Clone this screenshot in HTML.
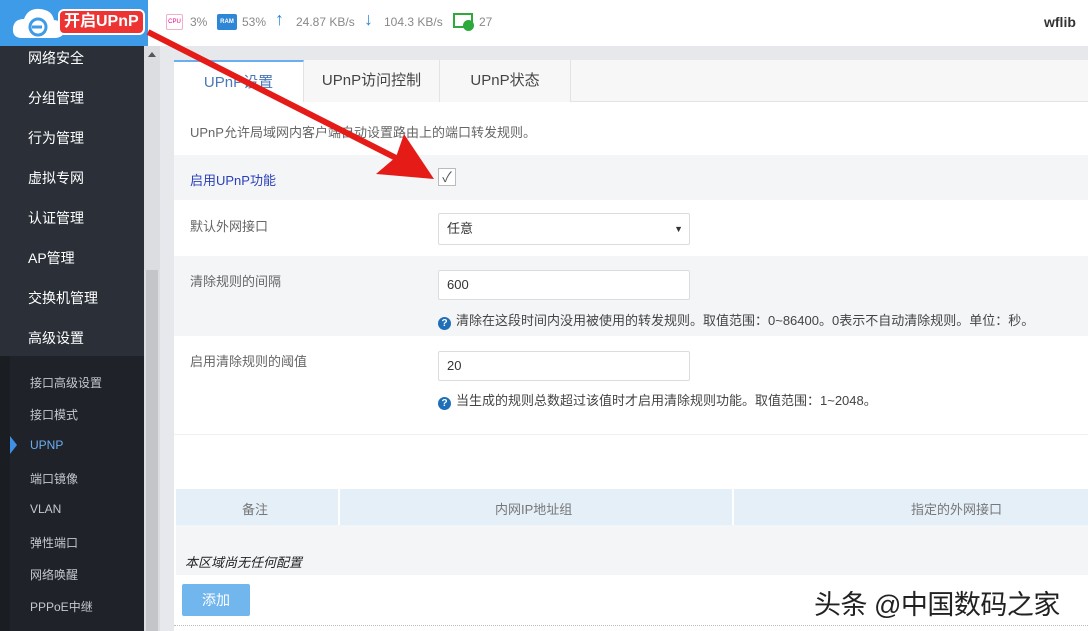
<!DOCTYPE html>
<html><head><meta charset="utf-8"><style>
*{margin:0;padding:0;box-sizing:border-box}
body{width:1088px;height:631px;overflow:hidden;position:relative;background:#e6e8eb;font-family:"Liberation Sans","Noto Sans CJK SC",sans-serif;font-size:13px;color:#666}
.a{position:absolute}
.top{left:0;top:0;width:1088px;height:46px;background:#fff}
.logo{left:0;top:0;width:148px;height:46px;background:#3e9be8}
.side{left:0;top:46px;width:144px;height:310px;background:#2b3038}
.sub{left:0;top:356px;width:144px;height:275px;background:#1f2329}
.m{position:absolute;left:28px;color:#fff;font-size:14px}
.s{position:absolute;left:30px;color:#c5c9cf;font-size:12px}
.sb{left:144px;top:46px;width:16px;height:585px;background:#dcdde0}
.thumb{left:146px;top:270px;width:12px;height:361px;background:#c4c5c8}
.panel{left:174px;top:60px;width:914px;height:571px;background:#fff}
.tab{position:absolute;top:0;height:42px;line-height:42px;text-align:center;font-size:15px;color:#444;border-right:1px solid #e3e3e3;background:#f7f7f7}
.row{position:absolute;left:174px;width:914px}
.lbl{position:absolute;left:16px;font-size:13px;color:#666}
.inp{position:absolute;left:264px;width:252px;height:30px;border:1px solid #dcdcdc;background:#fff;border-radius:2px;font-size:13px;color:#333;line-height:28px;padding-left:8px}
.hint{position:absolute;left:264px;font-size:13px;color:#444}
.q{display:inline-block;width:13px;height:13px;border-radius:50%;background:#1f6fb8;color:#fff;font-size:10px;line-height:13px;text-align:center;font-weight:bold;margin-right:5px;vertical-align:-1px}
</style></head><body>
<div class="a top"></div>
<div class="a logo">
<svg class="a" style="left:10px;top:4px" width="60" height="38"><path d="M12 34 Q2 34 3 24 Q4 15 14 15 Q18 4 30 5 Q42 6 44 16 Q54 17 54 26 Q54 34 44 34Z" fill="#fff"/><circle cx="28" cy="23" r="8" fill="none" stroke="#3e9be8" stroke-width="3"/><rect x="22" y="21.5" width="10" height="3" fill="#3e9be8"/></svg>
<div class="a" style="left:58px;top:9px;background:#e33;color:#fff;font-weight:bold;font-size:16px;padding:0 4px;border-radius:6px;border:2px solid #fff;line-height:22px">开启UPnP</div>
</div>
<div class="a" style="left:166px;top:14px;width:17px;height:16px;border:1px solid #f0b0c8;border-radius:2px;font-size:6px;color:#e08;text-align:center;line-height:14px">CPU</div>
<div class="a" style="left:190px;top:15px;color:#888;font-size:12px">3%</div>
<div class="a" style="left:217px;top:14px;width:20px;height:16px;background:#2e86d6;border-radius:2px;font-size:6px;color:#fff;text-align:center;line-height:16px;font-weight:bold">RAM</div>
<div class="a" style="left:242px;top:15px;color:#888;font-size:12px">53%</div>
<div class="a" style="left:275px;top:9px;color:#2e86d6;font-size:18px">↑</div>
<div class="a" style="left:296px;top:15px;color:#888;font-size:12px">24.87 KB/s</div>
<div class="a" style="left:364px;top:9px;color:#2e86d6;font-size:18px">↓</div>
<div class="a" style="left:384px;top:15px;color:#888;font-size:12px">104.3 KB/s</div>
<div class="a" style="left:453px;top:13px;width:20px;height:15px;border:2px solid #2eaa3c"></div>
<div class="a" style="left:463px;top:20px;width:11px;height:11px;border-radius:50%;background:#2eaa3c"></div>
<div class="a" style="left:479px;top:15px;color:#888;font-size:12px">27</div>
<div class="a" style="left:1044px;top:14px;color:#333;font-size:14px;font-weight:bold">wflib</div>

<div class="a side">
<div class="m" style="top:2px">网络安全</div><div class="m" style="top:42px">分组管理</div><div class="m" style="top:82px">行为管理</div><div class="m" style="top:122px">虚拟专网</div><div class="m" style="top:162px">认证管理</div><div class="m" style="top:202px">AP管理</div><div class="m" style="top:242px">交换机管理</div><div class="m" style="top:282px">高级设置</div>
</div>
<div class="a sub">
<div class="a" style="left:0;top:0;width:10px;height:275px;background:#1a1d22"></div>
<div class="s" style="top:18px">接口高级设置</div><div class="s" style="top:50px">接口模式</div><div class="s" style="top:82px;color:#6aaef0">UPNP</div><div class="s" style="top:114px">端口镜像</div><div class="s" style="top:146px">VLAN</div><div class="s" style="top:178px">弹性端口</div><div class="s" style="top:210px">网络唤醒</div><div class="s" style="top:242px">PPPoE中继</div>
<div class="a" style="left:10px;top:80px;border-left:7px solid #3e8fe6;border-top:9px solid transparent;border-bottom:9px solid transparent"></div>
</div>
<div class="a sb"></div><div class="a thumb"></div>
<div class="a" style="left:148px;top:52px;border-bottom:5px solid #555;border-left:4px solid transparent;border-right:4px solid transparent"></div>

<div class="a panel">
<div class="tab" style="left:0;width:130px;color:#4a78b8;background:#fff;border-top:2px solid #6aaef0">UPnP设置</div>
<div class="tab" style="left:130px;width:136px">UPnP访问控制</div>
<div class="tab" style="left:266px;width:131px">UPnP状态</div>
<div class="a" style="left:397px;top:0;width:517px;height:42px;background:#f7f7f7;border-bottom:1px solid #e3e3e3"></div>
</div>
<div class="row" style="top:120px;height:36px"><div class="lbl" style="top:2px;left:16px">UPnP允许局域网内客户端自动设置路由上的端口转发规则。</div></div>
<div class="row" style="top:155px;height:45px;background:#f4f5f7"><div class="lbl" style="top:15px;color:#2a3fb8">启用UPnP功能</div>
<div class="a" style="left:264px;top:13px;width:18px;height:18px;border:1px solid #bbb;background:#fff;font-size:14px;line-height:16px;text-align:center;color:#555">✓</div></div>
<div class="row" style="top:200px;height:56px"><div class="lbl" style="top:16px">默认外网接口</div><div class="inp" style="top:13px;height:32px;line-height:30px">任意<span style="position:absolute;right:6px;font-size:9px">▼</span></div></div>
<div class="row" style="top:256px;height:80px;background:#f4f5f7"><div class="lbl" style="top:15px">清除规则的间隔</div><div class="inp" style="top:14px">600</div><div class="hint" style="top:54px"><span class="q">?</span>清除在这段时间内没用被使用的转发规则。取值范围：0~86400。0表示不自动清除规则。单位：秒。</div></div>
<div class="row" style="top:336px;height:99px;border-bottom:1px solid #f0f0f0"><div class="lbl" style="top:15px">启用清除规则的阈值</div><div class="inp" style="top:15px">20</div><div class="hint" style="top:54px"><span class="q">?</span>当生成的规则总数超过该值时才启用清除规则功能。取值范围：1~2048。</div></div>
<div class="a" style="left:176px;top:489px;width:912px;height:36px;background:#e4eff8"></div>
<div class="a" style="left:338px;top:489px;width:2px;height:36px;background:#fff"></div>
<div class="a" style="left:732px;top:489px;width:2px;height:36px;background:#fff"></div>
<div class="a" style="left:242px;top:499px;color:#777">备注</div>
<div class="a" style="left:495px;top:499px;color:#777">内网IP地址组</div>
<div class="a" style="left:911px;top:499px;color:#777">指定的外网接口</div>
<div class="a" style="left:176px;top:525px;width:912px;height:50px;background:#f4f5f7"></div>
<div class="a" style="left:185px;top:552px;color:#222;font-style:italic;font-size:13px">本区域尚无任何配置</div>
<div class="a" style="left:182px;top:584px;width:68px;height:32px;background:#72b6ee;color:#fff;border-radius:2px;text-align:center;line-height:32px;font-size:14px">添加</div>
<div class="a" style="left:174px;top:625px;width:914px;border-top:1px dotted #bbb"></div>
<div class="a" style="left:814px;top:583px;color:#222;font-size:27px;letter-spacing:-0.5px;text-shadow:1px 1px 0 #fff,-1px -1px 0 #fff">头条 @中国数码之家</div>

<svg class="a" style="left:0;top:0" width="1088" height="631"><line x1="148" y1="32" x2="400" y2="160" stroke="#e41b17" stroke-width="6"/><polygon points="434,179 376,174 396,157 404,134" fill="#e41b17"/></svg>
</body></html>
